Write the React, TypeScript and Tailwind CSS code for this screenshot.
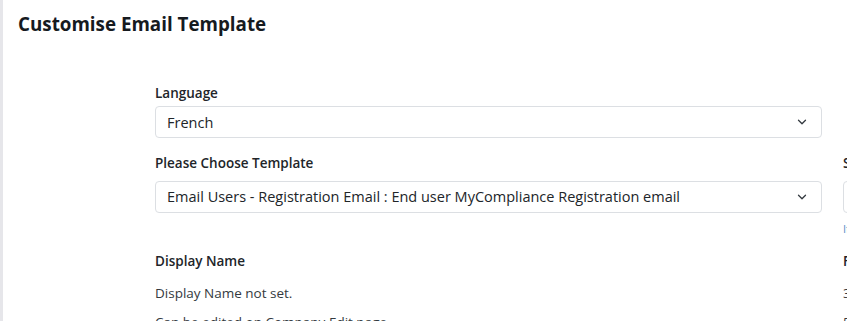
import { ChevronDown } from "lucide-react";

const Select = ({ value }: { value: string }) => {
  return (
    <div className="flex items-center justify-between h-[32px] pl-[11px] pr-[12px] border border-[#dcdfe3] rounded-[4px] bg-white text-[14.5px] text-[#212529]">
      <span className="truncate">{value}</span>
      <ChevronDown size={14} strokeWidth={2.2} className="text-[#343a40] shrink-0" />
    </div>
  );
};

const App = () => {
  return (
    <div
      className="h-[321px] w-[847px] overflow-hidden flex bg-white text-[#212529]"
      style={{ fontFamily: '"Open Sans", "Noto Sans", sans-serif' }}
    >
      <div className="w-[3px] shrink-0 bg-[#e6e6ea]" />
      <div className="flex-1 min-w-0">
        <h1 className="pl-[15px] pt-[10px] text-[18.8px] font-bold text-[#161a1f]">
          Customise Email Template
        </h1>

        <div className="pl-[152px] pt-[45px] grid grid-cols-[667px_240px] gap-x-[21px]">
          <div>
            <div className="text-[13.5px] font-semibold mb-[3px]">Language</div>
            <Select value="French" />
          </div>
          <div />

          <div className="mt-[15px]">
            <div className="text-[13.5px] font-semibold mb-[7px]">Please Choose Template</div>
            <Select value="Email Users - Registration Email : End user MyCompliance Registration email" />
          </div>
          <div className="mt-[15px]">
            <div className="text-[13.5px] font-semibold mb-[7px]">Subject</div>
            <div className="h-[32px] border border-[#dcdfe3] rounded-[4px]" />
            <div className="mt-[8px] text-[11px] text-[#5b8fc7]">If left blank</div>
          </div>

          <div className="mt-[14px]">
            <div className="text-[13.5px] font-semibold">Display Name</div>
            <div className="mt-[12px] text-[13.5px] text-[#343a40]">Display Name not set.</div>
            <div className="mt-[8px] text-[13.5px] text-[#343a40]">Can be edited on Company Edit page.</div>
          </div>
          <div className="mt-[14px]">
            <div className="text-[13.5px] font-semibold">From</div>
            <div className="mt-[12px] text-[13.5px] text-[#343a40]">3</div>
            <div className="mt-[8px] text-[13.5px] text-[#343a40]">5</div>
          </div>
        </div>
      </div>
    </div>
  );
};

export default App;
